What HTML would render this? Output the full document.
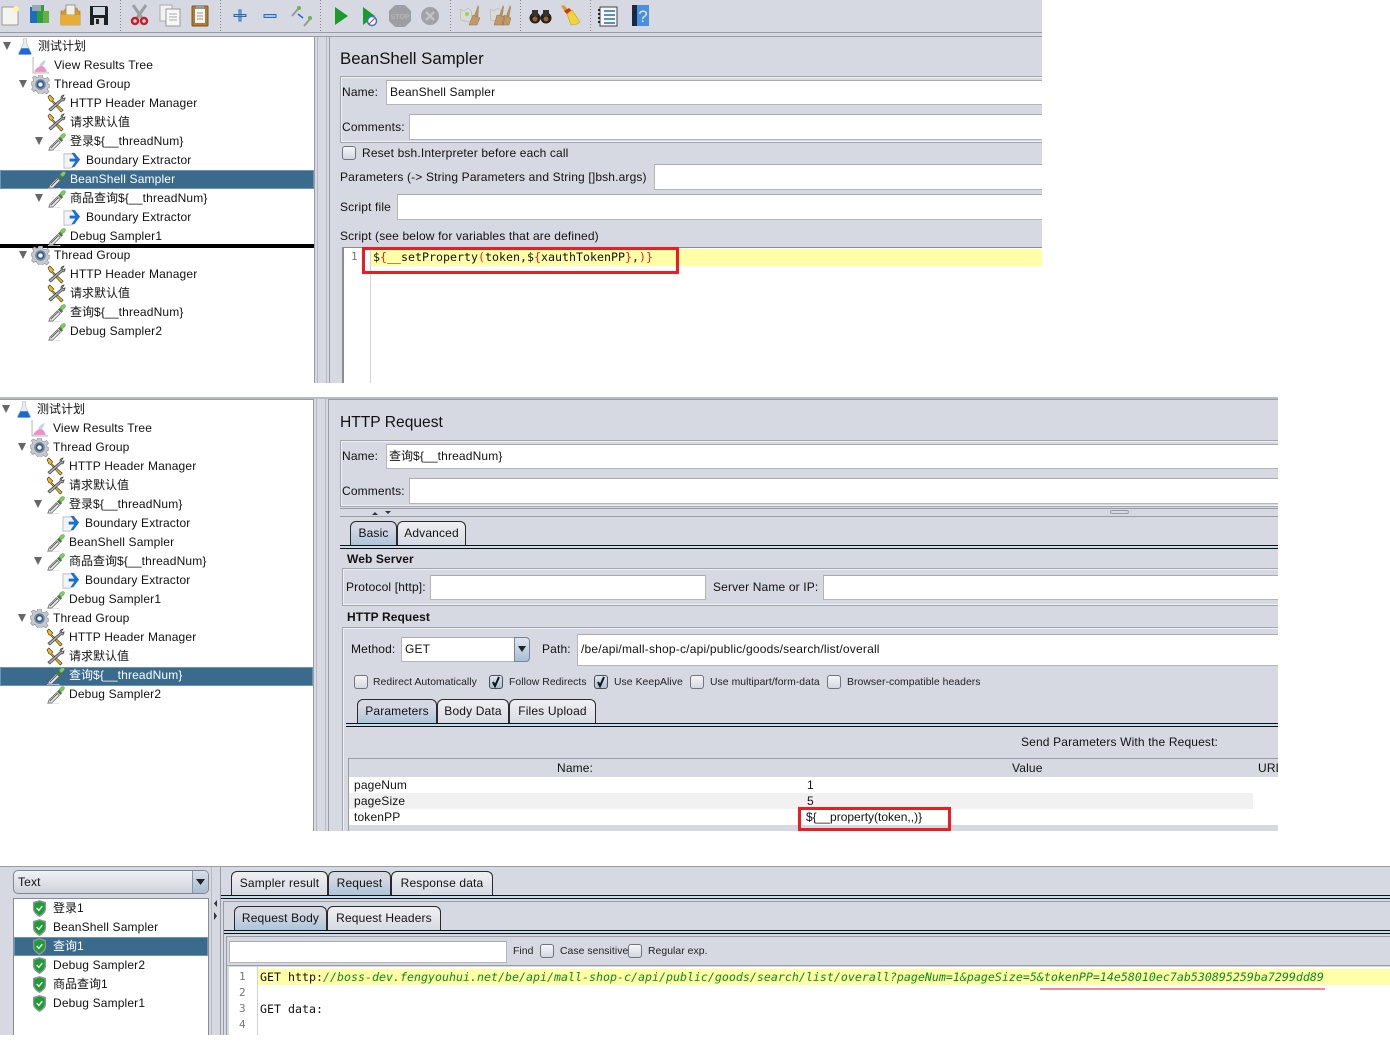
<!DOCTYPE html>
<html><head><meta charset="utf-8"><style>
html,body{margin:0;padding:0;background:#fff}
body{position:relative;width:1390px;height:1060px;overflow:hidden;font-family:"Liberation Sans","Noto Sans CJK SC",sans-serif;font-size:12px;color:#000}
div{position:absolute;box-sizing:border-box}
.p{background:#d6d9e2;overflow:hidden}
.t{white-space:nowrap;line-height:16px;height:16px;letter-spacing:.15px;color:#111;z-index:3}
.c{font-size:12px;letter-spacing:0}
.w{color:#fff}
.b{font-weight:bold;letter-spacing:.1px}
.s{font-size:10.4px;letter-spacing:.05px;color:#222}
.m{font-family:"DejaVu Sans Mono","Liberation Mono",monospace;font-size:11.63px;letter-spacing:0;color:#111}
.n{font-family:"DejaVu Sans Mono","Liberation Mono",monospace;font-size:11px;color:#777;letter-spacing:0}
.i{background:#fff;border:1px solid #b4b6bc;border-top-color:#a8aab0}
.sel{background:#3a6a8c;border:1px solid #6e94b5}
.v{background:#9a9ca5}
.l{background:#b8bac2}
.g{border:2px solid #eef0f3;outline:1px solid #a4a6ae;outline-offset:-1px}
.cb{width:14px;height:14px;border:1px solid #6e7480;border-radius:3px;background:linear-gradient(#f6f7f9,#d4d7df)}
.cb.on{background:linear-gradient(#dde7f0,#aabfd2);border-color:#44505e}
.tab{border:1px solid #2a2a2a;border-bottom:0;border-radius:6px 6px 0 0;background:linear-gradient(#eff0f3,#d6d9e2);text-align:center;line-height:22px;white-space:nowrap;letter-spacing:.15px;color:#111}
.tab.on{background:linear-gradient(#d6d9e2 25%,#a9c4da)}
.bar{height:4px;background:#c3dcee;border-top:1px solid #111;border-bottom:1px solid #111}
.red{border:3px solid #ed1c24;z-index:4}
.y{background:#ffffa8}
</style></head><body>

<div class="p" style="left:0;top:0;width:1042px;height:383px">
 <div class="v" style="left:0;top:32px;width:1042px;height:1px"></div>
 <div class="v" style="left:0;top:36px;width:1042px;height:1px"></div>
 <div style="left:0;top:37px;width:315px;height:346px;background:#fff;border-right:1px solid #9a9ca5"></div>
 <div class="l" style="left:317px;top:37px;width:1px;height:346px"></div>
 <div class="l" style="left:326px;top:37px;width:1px;height:346px"></div>
 <div class="v" style="left:329px;top:37px;width:1px;height:346px"></div>
 <div class="sel" style="left:0;top:170px;width:314px;height:19px"></div>
 <div style="left:0;top:244px;width:314px;height:4px;background:#000"></div>
 <div class="g" style="left:340px;top:76px;width:720px;height:67px"></div>
 <div class="i" style="left:386px;top:80px;width:670px;height:25px"></div>
 <div class="i" style="left:409px;top:114px;width:650px;height:26px"></div>
 <div class="cb" style="left:342px;top:146px"></div>
 <div class="i" style="left:654px;top:164px;width:400px;height:26px"></div>
 <div class="i" style="left:397px;top:194px;width:660px;height:26px"></div>
 <div style="left:342px;top:247px;width:720px;height:140px;background:#fff;border-left:2px solid #8a8c94;border-top:1px solid #8a8c94"></div>
 <div style="left:370px;top:248px;width:1px;height:135px;background:#d4d4d4"></div>
 <div class="y" style="left:371px;top:249px;width:680px;height:17px"></div>
</div>

<div class="p" style="left:0;top:397px;width:1278px;height:434px">
 <div style="left:0;top:0;width:1278px;height:2px;background:#b9bbc3"></div>
 <div style="left:0;top:2px;width:314px;height:432px;background:#fff;border-right:1px solid #9a9ca5;border-top:1px solid #9a9ca5"></div>
 <div class="l" style="left:316px;top:2px;width:1px;height:432px"></div>
 <div class="l" style="left:325px;top:2px;width:1px;height:432px"></div>
 <div class="v" style="left:328px;top:2px;width:1px;height:432px"></div>
 <div class="v" style="left:328px;top:2px;width:960px;height:1px"></div>
 <div class="sel" style="left:0;top:270px;width:313px;height:19px"></div>
 <div class="g" style="left:340px;top:43px;width:960px;height:67px"></div>
 <div class="i" style="left:386px;top:47px;width:910px;height:25px"></div>
 <div class="i" style="left:409px;top:81px;width:890px;height:26px"></div>
 <div class="v" style="left:340px;top:111px;width:960px;height:1px"></div>
 <div class="v" style="left:340px;top:119px;width:960px;height:1px"></div>
 <div style="left:1110px;top:113px;width:19px;height:4px;border:1px solid #9a9ca5;border-radius:2px"></div>
 <div class="tab on" style="left:350px;top:124px;width:47px;height:25px">Basic</div>
 <div class="tab" style="left:397px;top:124px;width:69px;height:25px">Advanced</div>
 <div class="bar" style="left:340px;top:148px;width:950px"></div>
 <div class="g" style="left:342px;top:171px;width:950px;height:38px"></div>
 <div class="i" style="left:430px;top:178px;width:276px;height:25px"></div>
 <div class="i" style="left:823px;top:178px;width:460px;height:25px"></div>
 <div class="g" style="left:342px;top:230px;width:950px;height:210px"></div>
 <div class="i" style="left:401px;top:240px;width:114px;height:25px"></div>
 <div style="left:514px;top:240px;width:16px;height:25px;border:1px solid #7a8494;border-radius:0 4px 4px 0;background:linear-gradient(#dde5ee,#a9bfd3)"></div>
 <div class="i" style="left:577px;top:237px;width:710px;height:32px"></div>
 <div class="cb" style="left:354px;top:278px"></div>
 <div class="cb on" style="left:489px;top:278px"></div>
 <div class="cb on" style="left:594px;top:278px"></div>
 <div class="cb" style="left:690px;top:278px"></div>
 <div class="cb" style="left:827px;top:278px"></div>
 <div class="tab on" style="left:357px;top:302px;width:80px;height:26px">Parameters</div>
 <div class="tab" style="left:437px;top:302px;width:72px;height:26px">Body Data</div>
 <div class="tab" style="left:509px;top:302px;width:87px;height:26px">Files Upload</div>
 <div class="bar" style="left:346px;top:326px;width:940px"></div>
 <div class="v" style="left:348px;top:361px;width:940px;height:1px"></div>
 <div class="v" style="left:348px;top:361px;width:1px;height:73px"></div>
 <div style="left:349px;top:380px;width:904px;height:48px;background:#fff"></div>
 <div style="left:1253px;top:380px;width:25px;height:48px;background:#fff"></div>
 <div style="left:349px;top:396px;width:904px;height:16px;background:#f1f1f1"></div>
</div>

<div class="p" style="left:0;top:866px;width:1390px;height:169px">
 <div class="v" style="left:0;top:0;width:1390px;height:1px"></div>
 <div style="left:13px;top:4px;width:196px;height:24px;border:1px solid #7f8592;border-radius:5px;background:linear-gradient(#f1f2f5,#cfd2da)"></div>
 <div style="left:192px;top:5px;width:16px;height:22px;border-left:1px solid #8a94a4;border-radius:0 4px 4px 0;background:linear-gradient(#d6dfe9,#a7bdd2)"></div>
 <div style="left:13px;top:32px;width:196px;height:140px;background:#fff;border:1px solid #8a8c94"></div>
 <div class="sel" style="left:14px;top:71px;width:194px;height:19px"></div>
 <div class="l" style="left:211px;top:1px;width:1px;height:168px"></div>
 <div class="v" style="left:220px;top:1px;width:1px;height:168px"></div>
 <div class="tab" style="left:231px;top:5px;width:97px;height:25px">Sampler result</div>
 <div class="tab on" style="left:328px;top:5px;width:63px;height:25px">Request</div>
 <div class="tab" style="left:391px;top:5px;width:102px;height:25px">Response data</div>
 <div class="bar" style="left:221px;top:29px;width:1169px"></div>
 <div class="v" style="left:223px;top:35px;width:1167px;height:1px"></div>
 <div class="v" style="left:223px;top:35px;width:1px;height:134px"></div>
 <div class="tab on" style="left:234px;top:40px;width:93px;height:25px">Request Body</div>
 <div class="tab" style="left:327px;top:40px;width:114px;height:25px">Request Headers</div>
 <div class="bar" style="left:224px;top:64px;width:1166px"></div>
 <div class="v" style="left:226px;top:70px;width:1164px;height:1px"></div>
 <div class="v" style="left:226px;top:70px;width:1px;height:99px"></div>
 <div class="i" style="left:229px;top:75px;width:278px;height:22px"></div>
 <div class="cb" style="left:540px;top:78px"></div>
 <div class="cb" style="left:628px;top:78px"></div>
 <div class="v" style="left:227px;top:99px;width:1163px;height:1px"></div>
 <div style="left:229px;top:101px;width:1161px;height:68px;background:#fff"></div>
 <div style="left:257px;top:101px;width:1px;height:68px;background:#d4d4d4"></div>
 <div class="y" style="left:258px;top:103px;width:1132px;height:16px"></div>
 <div style="left:1040px;top:122px;width:285px;height:2px;background:#f28a94"></div>
</div>

<svg width="1390" height="1060" viewBox="0 0 1390 1060" style="position:absolute;left:0;top:0;z-index:2">
<defs>
<symbol id="dr" viewBox="0 0 20 20"><path d="M1 19.500c5 .5 10 .5 13 0" stroke="#ddd" fill="none"/><path d="M3 16L11 8l3 3-8 8-4 0z" fill="#e8eaec" stroke="#666" stroke-width=".8"/><path d="M4 17l8-8" stroke="#555" stroke-width="1"/><path d="M11.500 7l3.500 3.500 2-2L13.500 5z" fill="#4a7a40"/><path d="M14 5c1-3 4-4 5-3s0 4-3 5z" fill="#86c964" stroke="#5f9e4a" stroke-width=".6"/></symbol>
<symbol id="wr" viewBox="0 0 20 20"><path d="M1 3l2-2 4 4-1 2 11 10-2 2L5 8 3 7z" fill="#f2b91c" stroke="#222" stroke-width=".6"/><path d="M18 1c-2 0-4 2-3 4L2 16l2 2L16 7c2 1 3-1 3-3l-2 1-1-1z" fill="#a8adb4" stroke="#333" stroke-width=".7"/></symbol>
<symbol id="fl" viewBox="0 0 18 20"><path d="M7 1h4v6l5 10c.5 1.500 0 2-1 2H3c-1 0-1.500-.5-1-2L7 7z" fill="#e8edf2" stroke="#b8bcc4" stroke-width=".7"/><path d="M5 12h8l3 6c0 1-.5 1-1 1H3c-1 0-1.500-.5-1-1z" fill="#1b69d2"/></symbol>
<symbol id="ge" viewBox="0 0 20 20"><path d="M8 0h4l.5 3 2.500 1 2.500-1.500 2 3-2 2 .5 2 2 1v2l-2 1-.5 2 1.500 2-2.500 2.500-2-1.500-2.500 1-.5 2H8l-.5-2.500L5 16l-2 1.500L.5 15 2 13l-.5-2-1.500-.5v-3L2 7l.5-2-1-2.500L4 1l2 1.500L7.500 2z" fill="#c5c8cd" stroke="#8a8d94" stroke-width=".6"/><circle cx="10" cy="10" r="5" fill="#eef0f3" stroke="#777"/><circle cx="10" cy="10" r="3.300" fill="#fff" stroke="#2a5ea8" stroke-width="2"/></symbol>
<symbol id="gr" viewBox="0 0 16 16"><path d="M1 0v15h15" stroke="#bbb" fill="none"/><path d="M2 14c2-4 4-4 6-6 2 0 4 1 6 6z" fill="#f08fc8"/><path d="M7 8c1-3 4-5 6-5-1 3-2 5-5 6z" fill="#bcd4ee"/></symbol>
<symbol id="ex" viewBox="0 0 20 20"><path d="M1 3h12v8c0 5-2 7-7 7H1z" fill="#f2f3f5" stroke="#bdbfc5"/><path d="M9 2h3l6 7-6 8H9l4-6H7V8h6z" fill="#1a6fd0"/></symbol>
<symbol id="sh" viewBox="0 0 16 18"><path d="M8 0l7 2v7c0 4-3 7-7 9-4-2-7-5-7-9V2z" fill="#8f9496"/><path d="M8 1.500l5.500 2v5.500c0 3-2.500 5.500-5.500 7.200-3-1.700-5.500-4.200-5.500-7.200V3.500z" fill="#1c9e34"/><path d="M5 8.500l2.300 2.500 3.700-4.500" stroke="#fff" stroke-width="1.400" fill="none"/></symbol>
<symbol id="ck" viewBox="0 0 14 14"><path d="M4 7l2 4 4-9" stroke="#111" stroke-width="2" fill="none"/></symbol>
</defs>

<!-- toolbar -->
<g stroke="#888" stroke-dasharray="1 2"><path d="M120.500 0v32M220.500 0v32M320.500 0v32M450.500 0v32M520.500 0v32M590.500 0v32"/></g>
<rect x="2" y="7" width="16" height="18" rx="1" fill="#f5f5f0" stroke="#999"/><circle cx="16" cy="9" r="3" fill="#fff2a0"/>
<rect x="30" y="7" width="8" height="16" fill="#1c6cc0"/><rect x="37" y="5" width="7" height="18" fill="#2f9e3a"/><rect x="43" y="11" width="6" height="12" fill="#66b13e"/><path d="M32 5h9v6h-9z" fill="#9aa7b4"/>
<path d="M61 11h3l2-3h11l1 3h2v14H61z" fill="#d99a24" stroke="#a7711a" stroke-width=".6"/><rect x="66" y="5" width="9" height="10" fill="#f0f0ea" stroke="#999"/><path d="M60 15h20v10H60z" fill="#e7ad37"/>
<path d="M90 6h17l1 1v18H90z" fill="#1c2126"/><rect x="93" y="7" width="12" height="8" fill="#cfd6de"/><rect x="94" y="18" width="10" height="7" fill="#d4d6d8"/><rect x="96" y="19" width="3" height="5" fill="#222"/>
<path d="M133 5l9 13M146 5l-9 13" stroke="#9b9ea5" stroke-width="3"/><circle cx="135" cy="21" r="3" fill="none" stroke="#c81e28" stroke-width="2.500"/><circle cx="144" cy="21" r="3" fill="none" stroke="#c81e28" stroke-width="2.500"/>
<rect x="160" y="5" width="12" height="16" fill="#f2f2f2" stroke="#aaa"/><rect x="166" y="9" width="14" height="17" fill="#f8f8f8" stroke="#999"/><path d="M169 14h8M169 17h8M169 20h8" stroke="#aaa"/>
<rect x="192" y="6" width="16" height="20" rx="1" fill="#b07a34" stroke="#7c5420"/><rect x="195" y="9" width="10" height="14" fill="#f4f4f0"/><rect x="196" y="5" width="8" height="4" fill="#999"/><path d="M197 13h6M197 16h6M197 19h6" stroke="#999"/>
<path d="M234 14.500h12v2h-12zM239 10h2v11h-2z" fill="#a8c8e8" stroke="#2a6cb0"/>
<rect x="264" y="14.500" width="12" height="3" fill="#a8c8e8" stroke="#2a6cb0"/>
<path d="M292 16l6-7M304 26l6-7" stroke="#999" stroke-width="2"/><circle cx="299" cy="8" r="2" fill="#6bb550"/><circle cx="310" cy="18" r="2" fill="#6bb550"/><path d="M298 14l5 4" stroke="#1a6fd0" stroke-width="1.500"/>
<path d="M335 7l13 9-13 9z" fill="#1c9a2c"/>
<path d="M363 7l12 9-12 9z" fill="#1c9a2c"/><circle cx="372" cy="21" r="4.500" fill="#fff" stroke="#3a78c8" stroke-width="1.500"/><path d="M369 24l6-6" stroke="#c8303a"/>
<path d="M395 5h10l6 6v10l-6 6h-10l-6-6V11z" fill="#9c9ea4"/><text x="400" y="19" font-family="Liberation Sans" font-size="7" font-weight="bold" fill="#b4b6bb" text-anchor="middle">STOP</text>
<circle cx="430" cy="16" r="9" fill="#a0a2a8"/><path d="M426 12l8 8M434 12l-8 8" stroke="#c0c2c7" stroke-width="2.500"/>
<path d="M460 9l4 2 4-3 3 3 1 8-3 3-8-2z" fill="#d8dbd6" stroke="#aaa" stroke-width=".5"/><circle cx="467" cy="14" r="2" fill="#a0d058"/><path d="M478 5l-4 11 4 3 1-12z" fill="#b09060"/><path d="M473 15l-4 10h8l3-7z" fill="#bf9a68" stroke="#94734a" stroke-width=".5"/>
<path d="M490 9l4 2 4-3 3 3 1 8-3 3-8-2z" fill="#d8dbd6" stroke="#aaa" stroke-width=".5"/><path d="M503 5l-4 11 3 3 2-12zM510 5l-4 11 3 3 2-12z" fill="#b09060"/><path d="M497 15l-3 10h9l2-8zM504 15l-2 10h7l2-7z" fill="#bf9a68" stroke="#94734a" stroke-width=".5"/>
<circle cx="535" cy="18" r="5.500" fill="#222"/><circle cx="546" cy="18" r="5.500" fill="#222"/><rect x="532" y="10" width="6" height="6" fill="#333"/><rect x="543" y="10" width="6" height="6" fill="#333"/><circle cx="535" cy="19" r="2.500" fill="#a0622a"/><circle cx="546" cy="19" r="2.500" fill="#a0622a"/>
<path d="M561 6l3-1 6 7-3 3z" fill="#d8a020"/><path d="M564 11l5-3 3 3-3 5z" fill="#c83028"/><path d="M567 14l5-4 8 12-3 2-6 1z" fill="#f2d43a" stroke="#c8a020" stroke-width=".6"/>
<rect x="600" y="7" width="17" height="19" fill="#f4f6f8" stroke="#444"/><path d="M604 11h11M604 15h11M604 19h11M604 23h11" stroke="#2a6cb0" stroke-width="1.500"/><path d="M599 9v16" stroke="#222" stroke-dasharray="2 2" stroke-width="2"/>
<rect x="632" y="5" width="17" height="21" fill="#4a90dc"/><rect x="632" y="5" width="5" height="21" fill="#1a2a44"/><text x="643" y="22" font-family="Liberation Sans" font-size="17" fill="#dfe9f4" text-anchor="middle">?</text>

<!-- tree 1 -->
<g fill="#666"><path d="M3 42h8l-4 8zM19 80h8l-4 8zM35 137h8l-4 8zM35 194h8l-4 8zM19 251h8l-4 8z"/></g>
<use href="#fl" x="17" y="37" width="16" height="19"/><use href="#gr" x="32" y="57" width="17" height="17"/><use href="#ge" x="31" y="75" width="19" height="19"/>
<use href="#wr" x="47" y="94" width="19" height="19"/><use href="#wr" x="47" y="113" width="19" height="19"/><use href="#dr" x="47" y="132" width="19" height="19"/><use href="#ex" x="63" y="151" width="19" height="19"/><use href="#dr" x="47" y="170" width="19" height="19"/><use href="#dr" x="47" y="189" width="19" height="19"/><use href="#ex" x="63" y="208" width="19" height="19"/><use href="#dr" x="47" y="227" width="19" height="19"/>
<use href="#ge" x="31" y="246" width="19" height="19"/><use href="#wr" x="47" y="265" width="19" height="19"/><use href="#wr" x="47" y="284" width="19" height="19"/><use href="#dr" x="47" y="303" width="19" height="19"/><use href="#dr" x="47" y="322" width="19" height="19"/>

<!-- tree 2 -->
<g fill="#666"><path d="M2 405h8l-4 8zM18 443h8l-4 8zM34 500h8l-4 8zM34 557h8l-4 8zM18 614h8l-4 8z"/></g>
<use href="#fl" x="16" y="400" width="16" height="19"/><use href="#gr" x="31" y="420" width="17" height="17"/><use href="#ge" x="30" y="438" width="19" height="19"/>
<use href="#wr" x="46" y="457" width="19" height="19"/><use href="#wr" x="46" y="476" width="19" height="19"/><use href="#dr" x="46" y="495" width="19" height="19"/><use href="#ex" x="62" y="514" width="19" height="19"/><use href="#dr" x="46" y="533" width="19" height="19"/><use href="#dr" x="46" y="552" width="19" height="19"/><use href="#ex" x="62" y="571" width="19" height="19"/><use href="#dr" x="46" y="590" width="19" height="19"/>
<use href="#ge" x="30" y="609" width="19" height="19"/><use href="#wr" x="46" y="628" width="19" height="19"/><use href="#wr" x="46" y="647" width="19" height="19"/><use href="#dr" x="46" y="666" width="19" height="19"/><use href="#dr" x="46" y="685" width="19" height="19"/>

<path d="M372 515l3-3 3 3zM385 511h6l-3 3z" fill="#333"/>
<path d="M518 646h8l-4 6z" fill="#222"/>
<use href="#ck" x="489" y="675" width="14" height="14"/><use href="#ck" x="594" y="675" width="14" height="14"/>
<path d="M196 879h9l-4.500 6z" fill="#222"/>
<path d="M217 900v7l-3-3.500zM214 912v8l3-4z" fill="#333"/>
<use href="#sh" x="32" y="900" width="15" height="17"/><use href="#sh" x="32" y="919" width="15" height="17"/><use href="#sh" x="32" y="938" width="15" height="17"/><use href="#sh" x="32" y="957" width="15" height="17"/><use href="#sh" x="32" y="976" width="15" height="17"/><use href="#sh" x="32" y="995" width="15" height="17"/>
</svg>

<!-- tree 1 text -->
<div class="t c" style="left:38px;top:38px">测试计划</div>
<div class="t" style="left:54px;top:57px">View Results Tree</div>
<div class="t" style="left:54px;top:76px">Thread Group</div>
<div class="t" style="left:70px;top:95px">HTTP Header Manager</div>
<div class="t c" style="left:70px;top:114px">请求默认值</div>
<div class="t" style="left:70px;top:133px"><span class="c">登录</span>${__threadNum}</div>
<div class="t" style="left:86px;top:152px">Boundary Extractor</div>
<div class="t w" style="left:70px;top:171px">BeanShell Sampler</div>
<div class="t" style="left:70px;top:190px"><span class="c">商品查询</span>${__threadNum}</div>
<div class="t" style="left:86px;top:209px">Boundary Extractor</div>
<div class="t" style="left:70px;top:228px">Debug Sampler1</div>
<div class="t" style="left:54px;top:247px">Thread Group</div>
<div class="t" style="left:70px;top:266px">HTTP Header Manager</div>
<div class="t c" style="left:70px;top:285px">请求默认值</div>
<div class="t" style="left:70px;top:304px"><span class="c">查询</span>${__threadNum}</div>
<div class="t" style="left:70px;top:323px">Debug Sampler2</div>

<!-- panel 1 text -->
<div class="t" style="left:340px;top:51px;font-size:16.8px;letter-spacing:0">BeanShell Sampler</div>
<div class="t" style="left:342px;top:84px">Name:</div>
<div class="t" style="left:390px;top:84px">BeanShell Sampler</div>
<div class="t" style="left:342px;top:119px">Comments:</div>
<div class="t" style="left:362px;top:145px">Reset bsh.Interpreter before each call</div>
<div class="t" style="left:340px;top:169px">Parameters (-&gt; String Parameters and String []bsh.args)</div>
<div class="t" style="left:340px;top:199px">Script file</div>
<div class="t" style="left:340px;top:228px">Script (see below for variables that are defined)</div>
<div class="t n" style="left:351px;top:249px">1</div>
<div class="t m" style="left:373px;top:249px">$<span style="color:#e8202a">{</span>__setProperty<span style="color:#e8202a">(</span>token,$<span style="color:#e8202a">{</span>xauthTokenPP<span style="color:#e8202a">}</span>,<span style="color:#e8202a">)}</span></div>
<div class="red" style="left:362px;top:247px;width:317px;height:27px"></div>

<!-- tree 2 text -->
<div class="t c" style="left:37px;top:401px">测试计划</div>
<div class="t" style="left:53px;top:420px">View Results Tree</div>
<div class="t" style="left:53px;top:439px">Thread Group</div>
<div class="t" style="left:69px;top:458px">HTTP Header Manager</div>
<div class="t c" style="left:69px;top:477px">请求默认值</div>
<div class="t" style="left:69px;top:496px"><span class="c">登录</span>${__threadNum}</div>
<div class="t" style="left:85px;top:515px">Boundary Extractor</div>
<div class="t" style="left:69px;top:534px">BeanShell Sampler</div>
<div class="t" style="left:69px;top:553px"><span class="c">商品查询</span>${__threadNum}</div>
<div class="t" style="left:85px;top:572px">Boundary Extractor</div>
<div class="t" style="left:69px;top:591px">Debug Sampler1</div>
<div class="t" style="left:53px;top:610px">Thread Group</div>
<div class="t" style="left:69px;top:629px">HTTP Header Manager</div>
<div class="t c" style="left:69px;top:648px">请求默认值</div>
<div class="t w" style="left:69px;top:667px"><span class="c">查询</span>${__threadNum}</div>
<div class="t" style="left:69px;top:686px">Debug Sampler2</div>

<!-- panel 2 text -->
<div class="t" style="left:340px;top:415px;font-size:15.6px;letter-spacing:0">HTTP Request</div>
<div class="t" style="left:342px;top:448px">Name:</div>
<div class="t" style="left:389px;top:448px"><span class="c">查询</span>${__threadNum}</div>
<div class="t" style="left:342px;top:483px">Comments:</div>
<div class="t b" style="left:347px;top:551px">Web Server</div>
<div class="t" style="left:346px;top:579px">Protocol [http]:</div>
<div class="t" style="left:713px;top:579px">Server Name or IP:</div>
<div class="t b" style="left:347px;top:609px">HTTP Request</div>
<div class="t" style="left:351px;top:641px">Method:</div>
<div class="t" style="left:405px;top:641px">GET</div>
<div class="t" style="left:542px;top:641px">Path:</div>
<div class="t" style="left:581px;top:641px;letter-spacing:.2px">/be/api/mall-shop-c/api/public/goods/search/list/overall</div>
<div class="t s" style="left:373px;top:675px">Redirect Automatically</div>
<div class="t s" style="left:509px;top:675px">Follow Redirects</div>
<div class="t s" style="left:614px;top:675px">Use KeepAlive</div>
<div class="t s" style="left:710px;top:675px">Use multipart/form-data</div>
<div class="t s" style="left:847px;top:675px">Browser-compatible headers</div>
<div class="t" style="left:1021px;top:734px">Send Parameters With the Request:</div>
<div class="t" style="left:557px;top:760px">Name:</div>
<div class="t" style="left:1012px;top:760px">Value</div>
<div class="t" style="left:1258px;top:760px;width:20px;overflow:hidden">URL</div>
<div class="t" style="left:354px;top:777px">pageNum</div>
<div class="t" style="left:807px;top:777px">1</div>
<div class="t" style="left:354px;top:793px">pageSize</div>
<div class="t" style="left:807px;top:793px">5</div>
<div class="t" style="left:354px;top:809px">tokenPP</div>
<div class="t" style="left:806px;top:809px;letter-spacing:0">${__property(token,,)}</div>
<div class="red" style="left:798px;top:807px;width:153px;height:24px"></div>

<!-- panel 3 text -->
<div class="t" style="left:18px;top:874px">Text</div>
<div class="t" style="left:53px;top:900px"><span class="c">登录</span>1</div>
<div class="t" style="left:53px;top:919px">BeanShell Sampler</div>
<div class="t w" style="left:53px;top:938px"><span class="c">查询</span>1</div>
<div class="t" style="left:53px;top:957px">Debug Sampler2</div>
<div class="t" style="left:53px;top:976px"><span class="c">商品查询</span>1</div>
<div class="t" style="left:53px;top:995px">Debug Sampler1</div>
<div class="t s" style="left:513px;top:944px">Find</div>
<div class="t s" style="left:560px;top:944px">Case sensitive</div>
<div class="t s" style="left:648px;top:944px">Regular exp.</div>
<div class="t n" style="left:239px;top:969px">1</div>
<div class="t n" style="left:239px;top:985px">2</div>
<div class="t n" style="left:239px;top:1001px">3</div>
<div class="t n" style="left:239px;top:1017px">4</div>
<div class="t m" style="left:260px;top:969px">GET http:<span style="color:#0a8a20;font-style:italic">//boss-dev.fengyouhui.net/be/api/mall-shop-c/api/public/goods/search/list/overall?pageNum=1&amp;pageSize=5&amp;tokenPP=14e58010ec7ab530895259ba7299dd89</span></div>
<div class="t m" style="left:260px;top:1001px">GET data:</div>
</body></html>
